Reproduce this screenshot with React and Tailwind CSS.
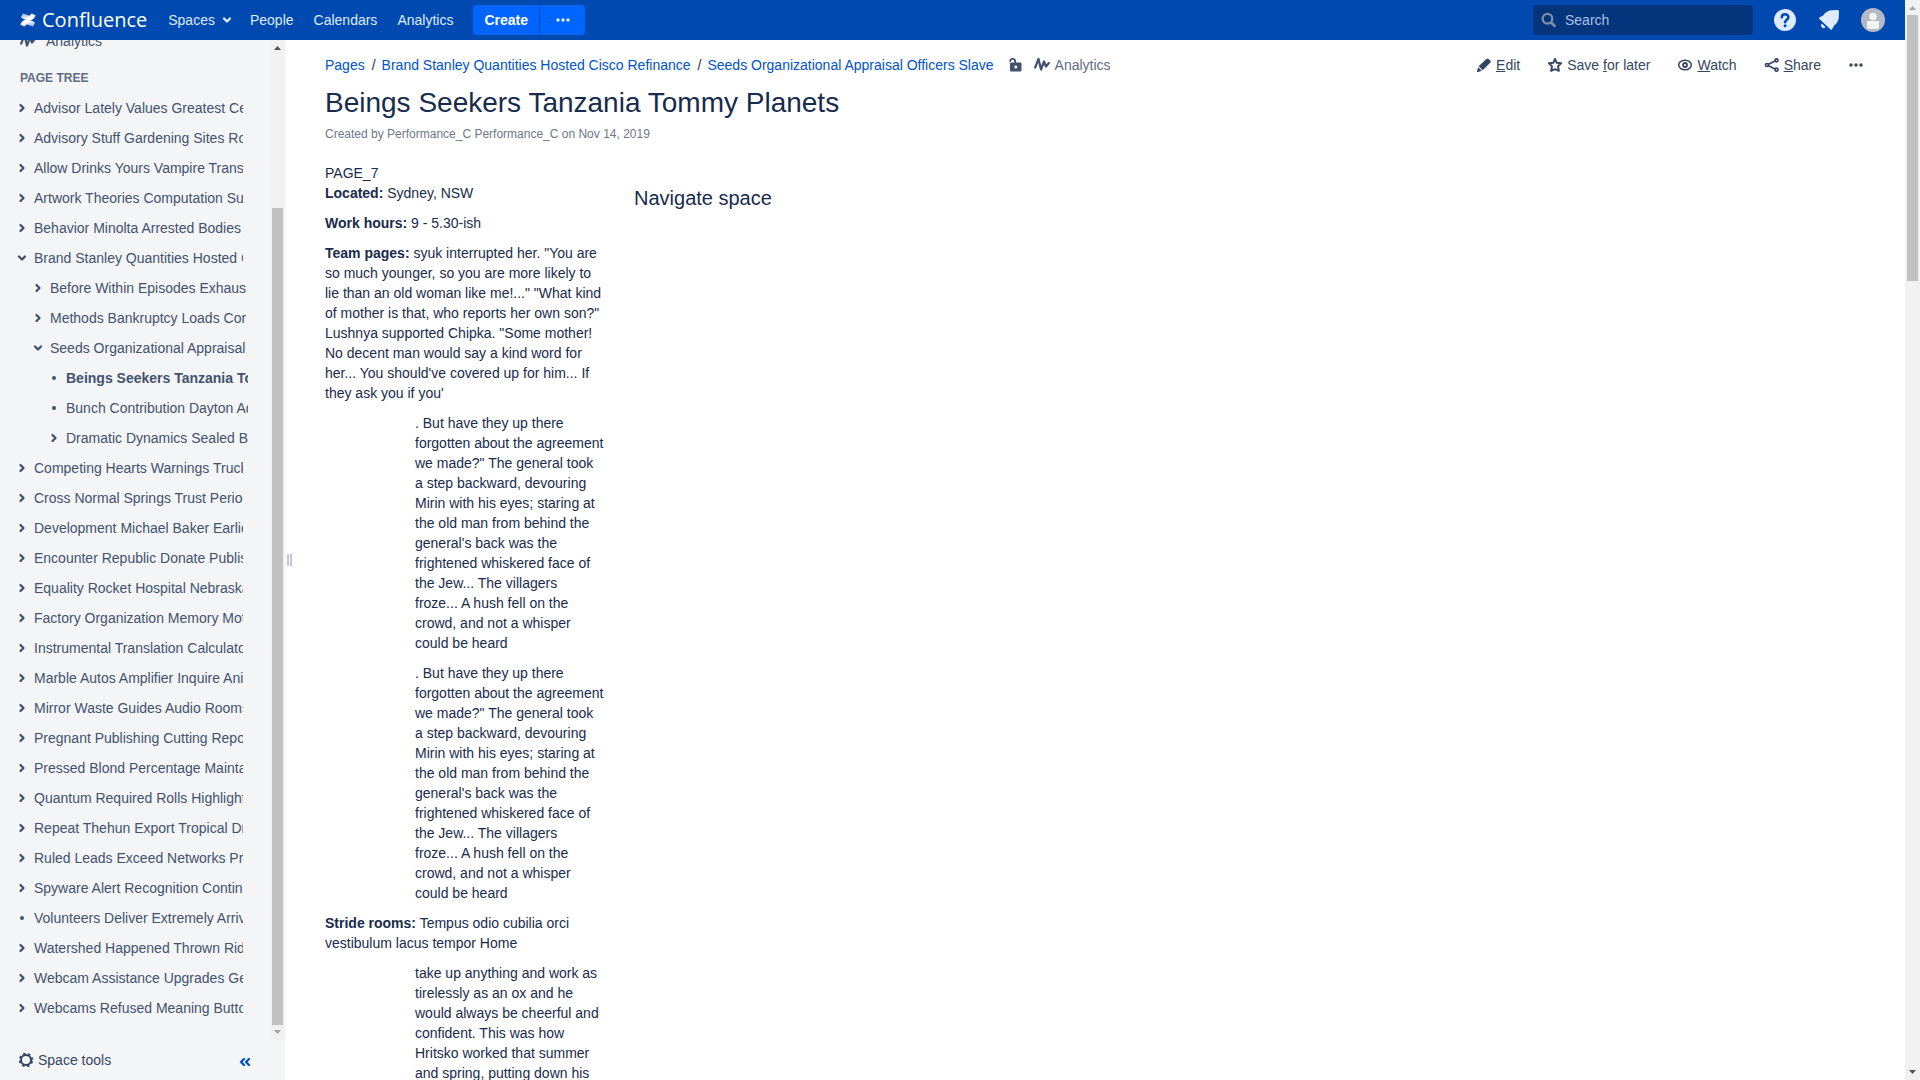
import React from "react";

const tree = [
  { t: "Advisor Lately Values Greatest Certain" },
  { t: "Advisory Stuff Gardening Sites Routes" },
  { t: "Allow Drinks Yours Vampire Transfer" },
  { t: "Artwork Theories Computation Supply" },
  { t: "Behavior Minolta Arrested Bodies Index" },
  { t: "Brand Stanley Quantities Hosted Cisco", k: "open" },
  { t: "Before Within Episodes Exhaust", l: 1 },
  { t: "Methods Bankruptcy Loads Corner", l: 1 },
  { t: "Seeds Organizational Appraisal Officers", l: 1, k: "open" },
  { t: "Beings Seekers Tanzania Tommy", l: 2, k: "leaf", current: true },
  { t: "Bunch Contribution Dayton Adult", l: 2, k: "leaf" },
  { t: "Dramatic Dynamics Sealed Basin", l: 2 },
  { t: "Competing Hearts Warnings Trucks" },
  { t: "Cross Normal Springs Trust Periods" },
  { t: "Development Michael Baker Earliest" },
  { t: "Encounter Republic Donate Published" },
  { t: "Equality Rocket Hospital Nebraska" },
  { t: "Factory Organization Memory Motors" },
  { t: "Instrumental Translation Calculator" },
  { t: "Marble Autos Amplifier Inquire Animal" },
  { t: "Mirror Waste Guides Audio Rooms" },
  { t: "Pregnant Publishing Cutting Reports" },
  { t: "Pressed Blond Percentage Maintain" },
  { t: "Quantum Required Rolls Highlights" },
  { t: "Repeat Thehun Export Tropical Drive" },
  { t: "Ruled Leads Exceed Networks Print" },
  { t: "Spyware Alert Recognition Continue" },
  { t: "Volunteers Deliver Extremely Arrive", k: "leaf" },
  { t: "Watershed Happened Thrown Riders" },
  { t: "Webcam Assistance Upgrades Gets" },
  { t: "Webcams Refused Meaning Buttons" },
];

const levelClass = ["ml-3.5 w-[229px]", "ml-[30px] w-[216px]", "ml-[46px] w-[202px]"];

function Marker({ kind }) {
  if (kind === "leaf") {
    return (
      <svg className="size-4" viewBox="0 0 16 16" fill="currentColor" aria-hidden="true">
        <circle cx="8" cy="8" r="2" />
      </svg>
    );
  }
  return (
    <svg className="size-4" viewBox="0 0 16 16" fill="none" stroke="currentColor" strokeWidth="2.300" strokeLinecap="round" strokeLinejoin="round" aria-hidden="true">
      <path d={kind === "open" ? "M5 6.500 8 9.500 11 6.500" : "M6.500 5 9.500 8 6.500 11"} />
    </svg>
  );
}

function AnalyticsIcon() {
  return (
    <svg className="size-4 shrink-0 text-[#42526e]" viewBox="0 0 16 16" fill="none" stroke="currentColor" strokeWidth="2.200" strokeLinecap="round" strokeLinejoin="round" aria-hidden="true">
      <path d="M1.200 10.500 4.500 2 7 12.500 10 4.500 12 9.500 14.800 6" />
    </svg>
  );
}

function Dots() {
  return (
    <svg className="size-4" viewBox="0 0 16 16" fill="currentColor" aria-hidden="true">
      <circle cx="3" cy="8" r="1.700" />
      <circle cx="8" cy="8" r="1.700" />
      <circle cx="13" cy="8" r="1.700" />
    </svg>
  );
}

function ScrollArrow({ up, dim }) {
  return (
    <svg className={dim ? "size-[15px] shrink-0 text-[#a3a3a3]" : "size-[15px] shrink-0 text-[#505050]"} viewBox="0 0 15 15" fill="currentColor" aria-hidden="true">
      <path d={up ? "M4 10h7L7.500 6z" : "M4 5h7L7.500 9z"} />
    </svg>
  );
}

function Header() {
  return (
    <header className="flex h-10 shrink-0 items-center bg-[#0049b0] pl-5 text-sm text-[#deebff]">
      <a href="#home" className="flex items-center gap-1.5 text-white">
        <svg className="size-4" viewBox="0 0 16 16" aria-hidden="true">
          <defs>
            <linearGradient id="lower" x1="1" y1="1" x2="0.300" y2="0.200">
              <stop offset="0" stopColor="#fff" stopOpacity="0.5" />
              <stop offset="0.800" stopColor="#fff" />
            </linearGradient>
            <linearGradient id="upper" x1="0" y1="0" x2="0.700" y2="0.800">
              <stop offset="0" stopColor="#fff" stopOpacity="0.5" />
              <stop offset="0.800" stopColor="#fff" />
            </linearGradient>
          </defs>
          <path fill="url(#lower)" d="M.6 11.700c-.3.500-.1.900.3 1.100l3 1.700c.4.200.8.100 1.100-.3 1.400-2.300 2.100-2.100 4.500-1l3 1.300c.4.200.8 0 1-.4l1.400-3.100c.2-.4 0-.8-.4-1-6.700-3.100-10.300-4-13.900 1.700z" />
          <path fill="url(#upper)" d="M15.400 4.300c.3-.5.100-.9-.3-1.100l-3-1.700c-.4-.2-.8-.1-1.100.3-1.400 2.300-2.100 2.100-4.500 1l-3-1.300c-.4-.2-.8 0-1 .4L1.100 5c-.2.400 0 .8.400 1 6.700 3.100 10.300 4 13.900-1.700z" />
        </svg>
        <span className="font-['Open_Sans',sans-serif] text-xl leading-8">Confluence</span>
      </a>
      <nav className="ml-[21px] flex items-center gap-5">
        <button type="button" className="-mr-[5px] flex items-center gap-1">
          Spaces
          <svg className="size-4" viewBox="0 0 16 16" fill="none" stroke="currentColor" strokeWidth="2.300" strokeLinecap="round" strokeLinejoin="round" aria-hidden="true">
            <path d="M5 6.500 8 9.500 11 6.500" />
          </svg>
        </button>
        <a href="#people">People</a>
        <a href="#calendars">Calendars</a>
        <a href="#analytics">Analytics</a>
        <div className="flex gap-px">
          <button type="button" className="h-[30px] rounded-l-[3px] bg-[#0065ff] px-[11px] font-bold text-white">Create</button>
          <button type="button" aria-label="Create from template" className="flex h-[30px] w-[45px] items-center justify-center rounded-r-[3px] bg-[#0065ff]">
            <Dots />
          </button>
        </div>
      </nav>
      <div className="ml-auto flex items-center pr-5">
        <label className="flex h-[30px] w-[220px] items-center gap-2 rounded-[3px] bg-[#04347c] px-2">
          <svg className="size-4 shrink-0 text-[#7f8da4]" viewBox="0 0 16 16" fill="none" stroke="currentColor" strokeWidth="2.300" strokeLinecap="round" aria-hidden="true">
            <circle cx="6.500" cy="6.700" r="4.800" />
            <path d="M10.300 10.700 13.500 13.700" strokeWidth="2.800" />
          </svg>
          <input type="search" aria-label="Search" placeholder="Search" className="w-full min-w-0 bg-transparent outline-none placeholder:text-[#a9c0e4]" />
        </label>
        <button type="button" aria-label="Help" className="ml-5">
          <svg className="size-6" viewBox="0 0 24 24" aria-hidden="true">
            <circle cx="12" cy="12" r="11" fill="#deebff" />
            <path d="M8.800 9.300c0-4 6.600-4 6.600 0 0 2.300-3.300 2.500-3.300 5" fill="none" stroke="#0049b0" strokeWidth="2.500" strokeLinecap="round" />
            <circle cx="12.100" cy="17.700" r="1.500" fill="#0049b0" />
          </svg>
        </button>
        <button type="button" aria-label="Notifications" className="ml-5">
          <svg className="size-6" viewBox="0 0 24 24" fill="#deebff" aria-hidden="true">
            <path d="M2.200 10.800c-.4-.4-.3-1 .2-1.200L6 7.500c2-3 5-5 8.500-5.300l6-.3c.8 0 1.500.6 1.500 1.500l-.2 6c-.3 3.500-2 6-4.600 8l-2.300 4c-.3.500-.9.600-1.300.2z" />
            <path d="M4.800 15.600a2.500 2.500 0 0 0 3.700 3.700z" />
          </svg>
        </button>
        <button type="button" aria-label="User menu" className="ml-5">
          <svg className="size-6" viewBox="0 0 24 24" aria-hidden="true">
            <circle cx="12" cy="12" r="12" fill="#b3bac5" />
            <circle cx="12" cy="8.500" r="3.700" fill="#f4f5f7" />
            <path d="M6 13h12v6c0 1.500-1 2-2 2H8c-1 0-2-.5-2-2z" fill="#f4f5f7" />
          </svg>
        </button>
      </div>
    </header>
  );
}

function Sidebar() {
  return (
    <aside className="flex w-[285px] shrink-0 flex-col bg-[#f4f5f7] text-sm text-[#42526e]">
      <div className="flex min-h-0 flex-1">
        <div className="flex min-w-0 flex-1 flex-col justify-end overflow-hidden pb-[17px]">
          <a href="#space-analytics" className="ml-5 flex shrink-0 items-center gap-2.5 leading-5">
            <AnalyticsIcon />
            Analytics
          </a>
          <h2 className="mt-[17px] ml-5 shrink-0 text-xs leading-5 font-bold text-[#5e6c84]">PAGE TREE</h2>
          <ul className="mt-[5px] shrink-0">
            {tree.map((n) => (
              <li key={n.t} className={"flex h-[30px] items-center gap-1 overflow-hidden whitespace-nowrap " + levelClass[n.l || 0]}>
                {n.k === "leaf" ? (
                  <span className="shrink-0"><Marker kind="leaf" /></span>
                ) : (
                  <button type="button" aria-label={"Toggle " + n.t} className="shrink-0"><Marker kind={n.k} /></button>
                )}
                <a href="#page" className={n.current ? "font-bold" : ""}>{n.t}</a>
              </li>
            ))}
          </ul>
        </div>
        <div className="flex w-[15px] shrink-0 flex-col bg-[#f1f1f1]" aria-hidden="true">
          <ScrollArrow up />
          <div className="grow-[153]" />
          <div className="mx-auto w-[11px] grow-[817] bg-[#c1c1c1]" />
          <ScrollArrow dim />
        </div>
      </div>
      <div className="flex h-10 shrink-0 items-center justify-between pr-8 pl-[18px]">
        <button type="button" className="flex items-center gap-1 text-[#344563]">
          <svg className="size-4" viewBox="0 0 16 16" fill="none" stroke="currentColor" aria-hidden="true">
            <circle cx="8" cy="8" r="5" strokeWidth="2" />
            <circle cx="8" cy="8" r="6.300" strokeWidth="1.800" strokeDasharray="2.470 2.478" strokeDashoffset="-1.237" />
          </svg>
          Space tools
        </button>
        <button type="button" aria-label="Collapse sidebar" className="mt-1 text-[#0052cc]">
          <svg className="size-4" viewBox="0 0 16 16" fill="none" stroke="currentColor" strokeWidth="2.300" strokeLinecap="round" strokeLinejoin="round" aria-hidden="true">
            <path d="M7 5 4 8l3 3M12 5 9 8l3 3" />
          </svg>
        </button>
      </div>
    </aside>
  );
}

const icon = "size-4 shrink-0";

function Actions() {
  return (
    <div className="flex items-center gap-[27px] text-[#344563]">
      <a href="#edit" className="flex items-center gap-1">
        <svg className={icon} viewBox="0 0 16 16" fill="currentColor" aria-hidden="true">
          <path d="M10.300 1.900 2.700 9.300l4 4 7.500-7.500c.8-.8.800-1.600 0-2.400L12.600 1.900c-.8-.7-1.600-.7-2.300 0zM2.200 10.200l3.600 3.600-3.700 1.200c-.8.200-1.300-.300-1.100-1.100z" />
        </svg>
        <span><u>E</u>dit</span>
      </a>
      <button type="button" className="flex items-center gap-1">
        <svg className={icon} viewBox="0 0 16 16" fill="none" stroke="currentColor" strokeWidth="1.900" strokeLinejoin="round" aria-hidden="true">
          <path d="m8 1.900 1.700 3.900 4.400.4-3.100 3 .9 4.700L8 12.200l-3.900 1.700.9-4.700-3.100-3 4.400-.4z" />
        </svg>
        <span>Save <u>f</u>or later</span>
      </button>
      <button type="button" className="flex items-center gap-1">
        <svg className={icon} viewBox="0 0 16 16" fill="none" stroke="currentColor" strokeWidth="1.500" aria-hidden="true">
          <ellipse cx="8" cy="8" rx="6.300" ry="4.800" />
          <circle cx="8" cy="8" r="2" strokeWidth="1.800" />
        </svg>
        <span><u>W</u>atch</span>
      </button>
      <button type="button" className="flex items-center gap-1">
        <svg className={icon} viewBox="0 0 16 16" fill="none" stroke="currentColor" strokeWidth="1.700" aria-hidden="true">
          <circle cx="3" cy="8" r="1.500" />
          <circle cx="12.500" cy="3.300" r="1.500" />
          <circle cx="12.500" cy="12.700" r="1.500" />
          <path d="m4.500 7.300 6.500-3.200M4.500 8.700l6.500 3.200" />
        </svg>
        <span><u>S</u>hare</span>
      </button>
      <button type="button" aria-label="More actions"><Dots /></button>
    </div>
  );
}

function Quote() {
  return (
    <p className="ml-[90px]">
      . But have they up there forgotten about the agreement we made?" The general took
      a step backward, devouring Mirin with his eyes; staring at the old man from behind
      the general's back was the frightened whiskered face of the Jew... The villagers
      <br />
      froze... A hush fell on the crowd, and not a whisper could be heard
    </p>
  );
}

function Content() {
  return (
    <main className="min-w-0 flex-1 overflow-hidden pt-[15px] pr-[41px] pl-8 text-sm leading-5 text-[#172b4d]">
      <div className="flex items-center justify-between whitespace-nowrap">
        <div className="flex items-center">
          <nav aria-label="Breadcrumb" className="flex gap-1.5 text-[#0052cc]">
            <a href="#pages">Pages</a>
            <span className="pl-px text-[#333333]">/</span>
            <a href="#brand">Brand Stanley Quantities Hosted Cisco Refinance</a>
            <span className="pl-px text-[#333333]">/</span>
            <a href="#seeds">Seeds Organizational Appraisal Officers Slave</a>
          </nav>
          <button type="button" aria-label="Unrestricted" className="ml-3.5 text-[#42526e]">
            <svg className="size-4" viewBox="0 0 16 16" aria-hidden="true">
              <path d="M2.200 4.200C2.200 1 7.200.9 7.200 4.500V7" fill="none" stroke="currentColor" strokeWidth="1.800" strokeLinecap="round" />
              <path fillRule="evenodd" fill="currentColor" d="M3.500 5.500h8.500c1 0 1.500.5 1.500 1.500v6c0 1-.5 1.500-1.500 1.500H3.500c-1 0-1.500-.5-1.500-1.500V7c0-1 .5-1.500 1.500-1.500zm4.300 3a1.500 1.500 0 1 0 0 3 1.500 1.500 0 0 0 0-3z" />
            </svg>
          </button>
          <a href="#page-analytics" className="ml-2.5 flex items-center gap-[5px] text-[#5e6c84]">
            <AnalyticsIcon />
            Analytics
          </a>
        </div>
        <Actions />
      </div>
      <h1 className="mt-3 text-[28px] leading-8">Beings Seekers Tanzania Tommy Planets</h1>
      <p className="mt-[5px] text-xs leading-5 text-[#6b778c]">Created by Performance_C Performance_C on Nov 14, 2019</p>
      <div className="mt-[19px] flex gap-[30px]">
        <div className="flex w-[279px] shrink-0 flex-col gap-2.5">
          <p>PAGE_7<br /><b>Located:</b> Sydney, NSW</p>
          <p><b>Work hours:</b> 9 - 5.30-ish</p>
          <p><b>Team pages:</b> syuk interrupted her. "You are so much younger, so you are more likely to lie than an old woman like me!..." "What kind of mother is that, who reports her own son?" Lushnya supported Chipka. "Some mother! No decent man would say a kind word for her... You should've covered up for him... If they ask you if you'</p>
          <Quote />
          <Quote />
          <p><b>Stride rooms:</b> Tempus odio cubilia orci vestibulum lacus tempor Home</p>
          <p className="ml-[90px]">take up anything and work as tirelessly as an ox and he would always be cheerful and confident. This was how Hritsko worked that summer and spring, putting down his</p>
        </div>
        <h2 className="mt-[23px] text-xl leading-6">Navigate space</h2>
      </div>
    </main>
  );
}

export default function App() {
  return (
    <div className="flex h-screen overflow-hidden bg-white font-['Liberation_Sans',Arial,sans-serif]">
      <div className="flex min-w-0 flex-1 flex-col">
        <Header />
        <div className="flex min-h-0 flex-1">
          <Sidebar />
          <div className="flex w-2 shrink-0 items-center justify-center gap-px" aria-hidden="true">
            <div className="h-3 w-0.5 bg-[#c1c7d0]" />
            <div className="h-3 w-0.5 bg-[#c1c7d0]" />
          </div>
          <Content />
        </div>
      </div>
      <div className="flex w-[15px] shrink-0 flex-col bg-[#f1f1f1]" aria-hidden="true">
        <ScrollArrow up dim />
        <div className="mx-auto w-[11px] grow-[266] bg-[#c1c1c1]" />
        <div className="grow-[784]" />
        <ScrollArrow />
      </div>
    </div>
  );
}
